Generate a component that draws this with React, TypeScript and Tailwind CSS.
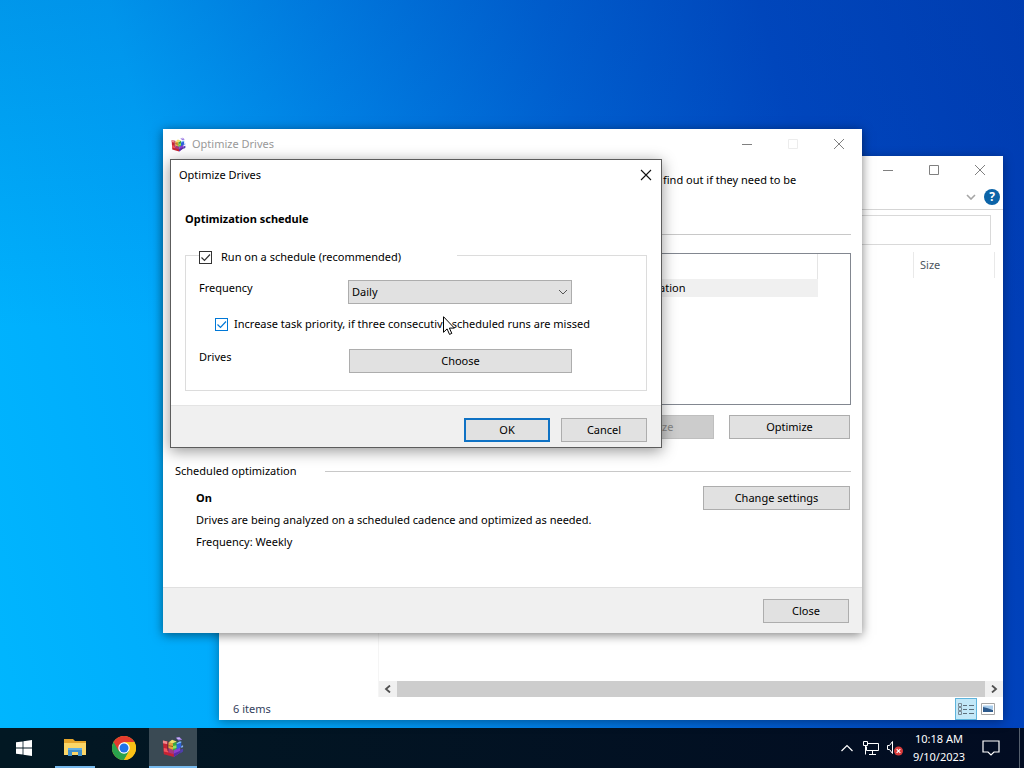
import React, { useState } from 'react';

type ButtonProps = {
  children: React.ReactNode;
  className?: string;
  disabled?: boolean;
};

const PushButton: React.FC<ButtonProps> = ({ children, className = '', disabled }) => (
  <button
    type="button"
    disabled={disabled}
    className={`flex h-6 items-center justify-center ${
      disabled ? 'bg-[#cccccc] text-[#838383] border border-[#bfbfbf]' : 'bg-[#e1e1e1] text-black'
    } ${className}`}
  >
    {children}
  </button>
);

// Colourful block stack used by the defrag tool
const DefragIcon: React.FC<{ className?: string }> = ({ className }) => (
  <svg viewBox="0 0 24 24" className={className} aria-hidden="true">
    <path d="M1 5l5 1v10l7 3v4L2 20z" fill="#c62334" />
    <path d="M1 5l5 1v3l-5-1z" fill="#f08a8f" />
    <path d="M2 13l4 1 1 4-5-1z" fill="#f2565c" />
    <path d="M6 6l1 0v10l6 2v1l-7-3z" fill="#7d1230" />
    <path d="M7 13l6 2v5l-6-2z" fill="#a8387f" />
    <path d="M13 15l7-3v6l-7 5z" fill="#8e3fd0" />
    <path d="M13 19l7-3v2l-7 5z" fill="#5b2ba6" />
    <path d="M7 7l5 1v7l-5-2z" fill="#e9a13c" />
    <path d="M12 8l4-2v8l-4 2z" fill="#3aa83e" />
    <path d="M7 7l4-3 5 2-4 2z" fill="#f0e06a" />
    <path d="M12 11l4-1v3l-4 1z" fill="#8fe35f" />
    <path d="M7 10l5 1v1l-5-1z" fill="#8a5a1c" />
    <path d="M16 8l5-2v6l-5 3z" fill="#2f62d9" />
    <path d="M16 8l3-2 2 0v1l-5 2z" fill="#84c4f7" />
    <path d="M15 2l4-1 3 3-4 1z" fill="#9a7be0" />
    <path d="M16 2l3 0 1 1-3 0z" fill="#dccbfa" />
    <path d="M20 15l3-1v3l-3 2z" fill="#4e3fae" />
    <path d="M21 11l2-1v2l-2 1z" fill="#86b3f2" />
  </svg>
);

const FolderIcon: React.FC = () => (
  <svg viewBox="0 0 22 18" className="h-[18px] w-[22px]" aria-hidden="true">
    <path d="M0 1h9l2 2h11v14H0z" fill="#e5a52b" />
    <path d="M0 5h22v12H0z" fill="#fbd667" />
    <path d="M4 10h14v8h-4v-4H8v4H4z" fill="#3f8fca" />
    <path d="M4 10h14v2H4z" fill="#62aee2" />
  </svg>
);

const ChromeIcon: React.FC = () => (
  <svg viewBox="0 0 48 48" className="h-6 w-6" aria-hidden="true">
    <circle cx="24" cy="24" r="24" fill="#fbc116" />
    <path d="M3.2 12A24 24 0 0 0 24 48L34.4 30 24 24z" fill="#2aa24c" />
    <path d="M24 12h20.8A24 24 0 0 1 24 48l10.4-18z" fill="#fbc116" />
    <path d="M3.2 12A24 24 0 0 1 44.8 12H24L13.6 30z" fill="#e33b2e" />
    <circle cx="24" cy="24" r="11.5" fill="#fff" />
    <circle cx="24" cy="24" r="9" fill="#1f73e8" />
  </svg>
);

const CaptionButtons: React.FC<{ dimMaximize?: boolean }> = ({ dimMaximize }) => (
  <div className="ml-auto flex self-stretch text-[#808080]">
    <button type="button" aria-label="Minimize" className="flex w-[46px] items-center justify-center">
      <svg viewBox="0 0 12 12" className="h-3 w-3" stroke="currentColor" fill="none">
        <path d="M1 6.5h10" />
      </svg>
    </button>
    <button
      type="button"
      aria-label="Maximize"
      disabled={dimMaximize}
      className={`flex w-[46px] items-center justify-center ${dimMaximize ? 'text-[#ececec]' : ''}`}
    >
      <svg viewBox="0 0 12 12" className="h-3 w-3" stroke="currentColor" fill="none">
        <path d="M1.5 1.5h9v9h-9z" />
      </svg>
    </button>
    <button type="button" aria-label="Close" className="flex w-[46px] items-center justify-center">
      <svg viewBox="0 0 12 12" className="h-3 w-3" stroke="currentColor" fill="none">
        <path d="M1 1l10 10M11 1L1 11" />
      </svg>
    </button>
  </div>
);

type CheckProps = {
  id: string;
  label: string;
  tone: string;
  gap: string;
};

const CheckBox: React.FC<CheckProps> = ({ id, label, tone, gap }) => {
  const [checked, setChecked] = useState(true);
  return (
    <div className={`flex items-center ${gap}`}>
      <span className={`relative h-[13px] w-[13px] ${tone}`}>
        <input
          id={id}
          type="checkbox"
          checked={checked}
          onChange={() => setChecked(!checked)}
          className="block h-[13px] w-[13px] appearance-none border border-current bg-white"
        />
        {checked && (
          <svg viewBox="0 0 13 13" className="pointer-events-none absolute inset-0" fill="none" stroke="currentColor" strokeWidth="1.2">
            <path d="M2.5 6.5l3 3 5.5-6" />
          </svg>
        )}
      </span>
      <label htmlFor={id}>{label}</label>
    </div>
  );
};

const ExplorerWindow: React.FC = () => (
  <section className="absolute top-[156px] right-[21px] bottom-2 left-[219px] flex flex-col bg-white shadow-[0_2px_10px_rgba(0,0,0,0.35)]">
    <div className="flex h-7 items-center">
      <CaptionButtons />
    </div>
    <div className="flex h-[26px] items-center justify-end gap-2 border-b border-[#d5d5d5] pr-[3px]">
      <svg viewBox="0 0 10 6" className="h-1.5 w-2.5" fill="none" stroke="#a5a5a5" strokeWidth="1.6">
        <path d="M1 1l4 4 4-4" />
      </svg>
      <button
        type="button"
        aria-label="Help"
        className="flex h-4 w-4 items-center justify-center rounded-full bg-[#0c64a8] text-[12px] leading-4 font-bold text-white"
      >
        ?
      </button>
    </div>
    <div className="mt-[5px] mr-3 flex">
      <input aria-label="Search" className="h-[30px] flex-1 border border-[#d9d9d9]" />
    </div>
    <div className="flex min-h-0 flex-1">
      <div className="w-40 border-r border-[#f5f5f5]" />
      <div className="flex flex-1 flex-col">
        <table className="mt-[7px] mr-2 table-fixed text-[#4c5560]">
          <thead>
            <tr className="h-[26px]">
              <td />
              <th className="w-[81px] border-x border-[#e9e9e9] pl-1.5 text-left font-normal">Size</th>
            </tr>
          </thead>
        </table>
        <div className="mt-auto flex h-4 bg-[#f0f0f0]">
          <button type="button" aria-label="Scroll left" className="flex w-[18px] items-center justify-center">
            <svg viewBox="0 0 8 8" className="h-2 w-2" fill="none" stroke="#505050" strokeWidth="1.8">
              <path d="M6 0.5L2 4l4 3.5" />
            </svg>
          </button>
          <div className="flex-1 bg-[#cdcdcd]" />
          <button type="button" aria-label="Scroll right" className="flex w-[18px] items-center justify-center">
            <svg viewBox="0 0 8 8" className="h-2 w-2" fill="none" stroke="#505050" strokeWidth="1.8">
              <path d="M2 0.5L6 4 2 7.5" />
            </svg>
          </button>
        </div>
      </div>
    </div>
    <div className="flex h-[23px] items-center justify-between pr-2 pl-3.5 text-[#33405c]">
      <span>6 items</span>
      <div className="flex items-center gap-1">
        <button
          type="button"
          aria-label="Details view"
          className="flex h-[22px] w-[22px] items-center justify-center border border-[#5fb4dc] bg-[#c3e8f8]"
        >
          <svg viewBox="0 0 16 14" className="h-3.5 w-4" fill="none" stroke="#5d6f7c">
            <path d="M0.5 1.5h3v3h-3zM0.5 5.5h3v3h-3zM0.5 9.5h3v3h-3z" stroke="#7b8b96" />
            <path d="M5 3.5h4M11 3.5h5M5 7.5h4M11 7.5h5M5 11.5h4M11 11.5h5" />
          </svg>
        </button>
        <button type="button" aria-label="Large icons view" className="flex w-3.5 items-center justify-center">
          <svg viewBox="0 0 14 12" className="h-3 w-3.5" aria-hidden="true">
            <path d="M0.5 0.5h13v11H0.5z" fill="#fff" stroke="#a5a5a5" />
            <path d="M2 2.5h10v4H2z" fill="#a9cdec" />
            <path d="M2 4l4 1 6 2v2H2z" fill="#2d5a8c" />
          </svg>
        </button>
      </div>
    </div>
  </section>
);

const ScheduleDialog: React.FC = () => (
  <div
    role="dialog"
    aria-label="Optimize Drives"
    className="absolute top-[30px] left-[7px] w-[492px] border border-[#5c5c5c] bg-white shadow-[0_3px_14px_rgba(0,0,0,0.42)]"
  >
    <div className="flex h-[30px] items-center justify-between pl-2">
      <span>Optimize Drives</span>
      <button type="button" aria-label="Close dialog" className="flex h-full w-[30px] items-center justify-center">
        <svg viewBox="0 0 12 12" className="h-3 w-3" stroke="#111111" strokeWidth="1.1" fill="none">
          <path d="M1 1l10 10M11 1L1 11" />
        </svg>
      </button>
    </div>
    <div className="px-3.5 pt-[19px] pb-3.5">
      <h2 className="leading-5 font-bold">Optimization schedule</h2>
      <fieldset className="mt-4 border border-[#dcdcdc] px-[13px] pt-[15px] pb-[17px]">
        <legend className="w-[258px] pt-1">
          <CheckBox id="run-schedule" label="Run on a schedule (recommended)" tone="text-[#333333]" gap="gap-[9px]" />
        </legend>
        <div className="flex items-start">
          <label htmlFor="frequency" className="w-[149px]">
            Frequency
          </label>
          <div className="relative">
            <select
              id="frequency"
              defaultValue="Daily"
              className="block h-6 w-[224px] appearance-none border border-[#adadad] bg-[#e1e1e1] px-[3px]"
            >
              <option>Daily</option>
            </select>
            <svg
              viewBox="0 0 10 6"
              className="pointer-events-none absolute top-[9px] right-1 h-1.5 w-2.5"
              fill="none"
              stroke="#555555"
            >
              <path d="M1 1l4 4 4-4" />
            </svg>
          </div>
        </div>
        <div className="mt-3 pl-4">
          <CheckBox
            id="task-priority"
            label="Increase task priority, if three consecutive scheduled runs are missed"
            tone="text-[#0078d7]"
            gap="gap-1.5"
          />
        </div>
        <div className="mt-[17px] flex items-start">
          <span className="w-[150px]">Drives</span>
          <PushButton className="w-[223px] border border-[#adadad]">Choose</PushButton>
        </div>
      </fieldset>
    </div>
    <div className="flex justify-end gap-[11px] border-t border-[#e4e4e4] bg-[#f0f0f0] px-3.5 pt-3 pb-[5px]">
      <PushButton className="w-[86px] border-2 border-[#0f72c4]">OK</PushButton>
      <PushButton className="w-[86px] border border-[#adadad]">Cancel</PushButton>
    </div>
  </div>
);

const OptimizeWindow: React.FC = () => (
  <section className="absolute top-[129px] right-[162px] left-[163px] bg-white shadow-[0_2px_10px_rgba(0,0,0,0.5)]">
    <div className="flex h-[30px] items-center gap-1.5 pl-2 text-[#999999]">
      <DefragIcon className="h-[15px] w-[15px]" />
      <span>Optimize Drives</span>
      <CaptionButtons dimMaximize />
    </div>
    <div className="pt-[11px] pr-[11px] pl-3">
      <p className="ml-auto w-[188px] leading-5">find out if they need to be</p>
      <hr className="mt-11 border-[#c8c8c8]" />
      <div className="mt-[18px] h-[152px] border border-[#828790] pr-8">
        <table className="w-full table-fixed">
          <thead>
            <tr className="h-[25px]">
              <td />
              <td className="w-[197px] border-r border-[#e5e5e5]" />
            </tr>
          </thead>
          <tbody>
            <tr className="h-[18px] bg-[#f0f0f0]">
              <td />
              <td>optimization</td>
            </tr>
          </tbody>
        </table>
      </div>
      <div className="mt-2.5 flex justify-end gap-[15px] pr-px">
        <PushButton className="w-[121px]" disabled>
          Analyze
        </PushButton>
        <PushButton className="w-[121px] border border-[#adadad]">Optimize</PushButton>
      </div>
      <div className="mt-6 flex items-center gap-7">
        <h3>Scheduled optimization</h3>
        <hr className="flex-1 border-[#c8c8c8]" />
      </div>
      <div className="mt-[7px] flex items-start justify-between pr-px pl-[21px]">
        <div className="pt-px leading-[22px]">
          <p className="font-bold">On</p>
          <p>Drives are being analyzed on a scheduled cadence and optimized as needed.</p>
          <p>Frequency: Weekly</p>
        </div>
        <PushButton className="w-[147px] border border-[#adadad]">Change settings</PushButton>
      </div>
    </div>
    <div className="mt-[34px] flex justify-end border-t border-[#e0e0e0] bg-[#f0f0f0] pt-[11px] pr-[13px] pb-2.5">
      <PushButton className="w-[86px] border border-[#adadad]">Close</PushButton>
    </div>
    <ScheduleDialog />
  </section>
);

const Taskbar: React.FC = () => (
  <footer className="flex h-10 items-stretch bg-gradient-to-r from-[#021823] to-[#020c22] text-white">
    <button type="button" aria-label="Start" className="flex w-12 items-center justify-center">
      <svg viewBox="0 0 16 16" className="h-4 w-4" fill="#ffffff">
        <path d="M0 2.3l6.6-.9v6.1H0zM7.4 1.3L16 0v7.5H7.4zM0 8.4h6.6v6.2L0 13.7zM7.4 8.4H16V16l-8.6-1.2z" />
      </svg>
    </button>
    <button type="button" aria-label="File Explorer" className="ml-[7px] flex w-10 items-center justify-center border-b-2 border-[#76b9ed]">
      <FolderIcon />
    </button>
    <button type="button" aria-label="Chrome" className="ml-[5px] flex w-12 items-center justify-center">
      <ChromeIcon />
    </button>
    <button
      type="button"
      aria-label="Optimize Drives"
      className="ml-px flex w-12 items-center justify-center border-b-2 border-[#76b9ed] bg-[#3a4a54]"
    >
      <DefragIcon className="h-[22px] w-[22px]" />
    </button>
    <div className="ml-auto flex items-center">
      <svg viewBox="0 0 12 8" className="h-2 w-3" fill="none" stroke="#ffffff" strokeWidth="1.2" aria-hidden="true">
        <path d="M0.5 7L6 1.5 11.5 7" />
      </svg>
      <svg viewBox="0 0 16 14" className="ml-2.5 h-3.5 w-4" fill="none" stroke="#ffffff" aria-hidden="true">
        <path d="M4.5 2.5h11v7h-12v-4" />
        <path d="M0.5 0.5h4v4h-4zM2.5 4.5v9M9.5 9.5v4M6 13.5h7" />
      </svg>
      <svg viewBox="0 0 17 16" className="ml-2 h-4 w-[17px]" aria-hidden="true">
        <path d="M0.5 5.5h2l3-4v12l-3-4h-2z" fill="none" stroke="#ffffff" />
        <circle cx="11.5" cy="11" r="4.5" fill="#d83b3b" />
        <path d="M9.7 9.2l3.6 3.6M13.3 9.2l-3.6 3.6" stroke="#ffffff" strokeWidth="1.2" />
      </svg>
      <div className="ml-1.5 w-[58px] text-center leading-[18px] whitespace-nowrap">
        <div>10:18 AM</div>
        <div>9/10/2023</div>
      </div>
      <svg viewBox="0 0 18 16" className="ml-3.5 h-4 w-[18px]" fill="none" stroke="#ffffff" strokeWidth="1.2" aria-hidden="true">
        <path d="M1 1h16v11h-5l-3 3-3-3H1z" />
      </svg>
      <div className="ml-[19px] h-10 w-[5px] border-l border-[#56606e]" />
    </div>
  </footer>
);

const App: React.FC = () => (
  <div className="flex h-screen flex-col overflow-hidden font-['Noto_Sans','Open_Sans',sans-serif] text-[11px] leading-4 text-black">
    <main className="relative flex-1 bg-[linear-gradient(180deg,rgba(0,70,170,0.22)_0%,rgba(0,70,170,0)_45%),linear-gradient(76deg,#00b6fe_0%,#00a9fc_24%,#0085ea_42%,#0062d4_60%,#0046c0_78%,#003ab2_100%)]">
      <ExplorerWindow />
      <OptimizeWindow />
      <svg viewBox="0 0 12 19" className="pointer-events-none absolute top-[316px] left-[443px] h-[19px] w-3" aria-hidden="true">
        <path d="M0.5 0.7v15.6l3.6-3.4 2.4 5.5 2.3-1-2.4-5.3h5z" fill="#ffffff" stroke="#000000" />
      </svg>
    </main>
    <Taskbar />
  </div>
);

export default App;
